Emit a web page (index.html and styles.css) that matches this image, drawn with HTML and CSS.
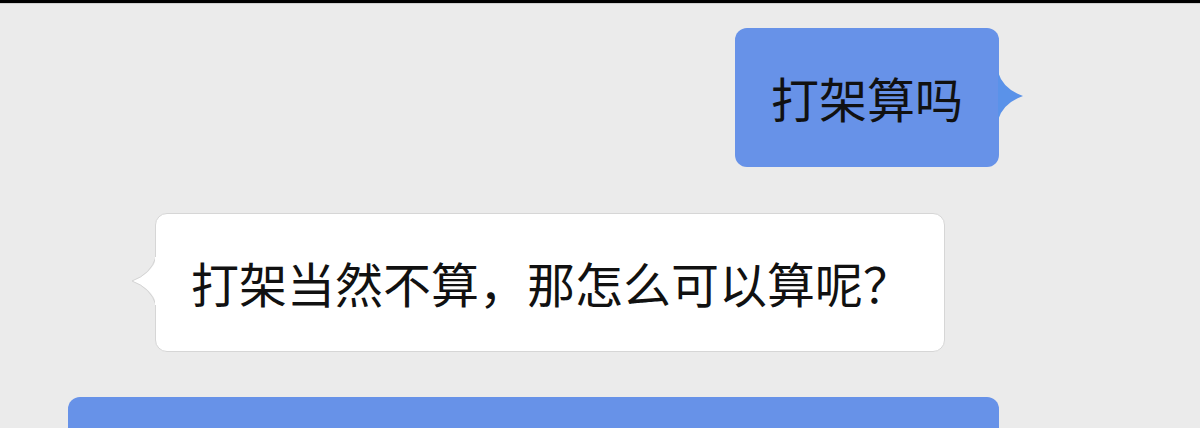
FILE: index.html
```html
<!DOCTYPE html>
<html>
  <head>
    <meta charset="utf-8">
    <title>chat</title>
    <link rel="stylesheet" href="styles.css">
  </head>
  <body>
    <div class="topbar"></div>
    <div class="chat">
      <div class="row mine">
        <div class="bubble blue">
          打架算吗
          <svg class="tail" width="26" height="48" viewBox="0 0 26 48">
            <path d="M0 0 Q5 17 25 24 Q5 31 0 48 Z" fill="#5a92e9"/>
          </svg>
        </div>
      </div>
      <div class="row theirs">
        <div class="bubble white">
          打架当然不算，那怎么可以算呢？
          <svg class="tail" width="26" height="48" viewBox="0 0 26 48">
            <path d="M26 0 Q21 17 1 24 Q21 31 26 48 Z" fill="#fff"/>
            <path d="M25 0 Q20 17 1 24 Q20 31 25 48" fill="none" stroke="#d4d4d4"/>
            <rect x="24" y="0" width="2" height="48" fill="#fff"/>
          </svg>
        </div>
      </div>
      <div class="row mine">
        <div class="bubble blue">
          那我们就讲道理吧，先把事情说清楚，谁对谁错大家心里都有数，好好说话就行了
        </div>
      </div>
    </div>
  </body>
</html>
```

FILE: styles.css
```css
* { box-sizing: border-box; }
body {
  margin: 0;
  background: #ebebeb;
  font-family: "Noto Sans CJK SC", "Noto Sans", sans-serif;
  color: #111;
  overflow: hidden;
}
.topbar {
  height: 4px;
  background: #000;
  border-bottom: 1px solid #cfcfcf;
}
.chat {
  display: flex;
  flex-direction: column;
  gap: 45px;
  padding: 24px 201px 40px 68px;
}
.row {
  display: flex;
}
.row.mine {
  justify-content: flex-end;
}
.row.theirs {
  justify-content: flex-start;
  padding-left: 87px;
  margin-top: 1px;
}
.bubble {
  position: relative;
  font-size: 48px;
  line-height: 67px;
  padding: 36px 36px;
  border-radius: 12px;
}
.bubble.blue {
  background: #6792e8;
}
.bubble.white {
  background: #fff;
  border: 1px solid #d6d6d6;
  padding: 35px 33px 35px 35px;
}
.tail {
  position: absolute;
  top: 44px;
  display: block;
}
.blue .tail {
  right: -25px;
}
.white .tail {
  left: -25px;
  top: 43px;
}
```
